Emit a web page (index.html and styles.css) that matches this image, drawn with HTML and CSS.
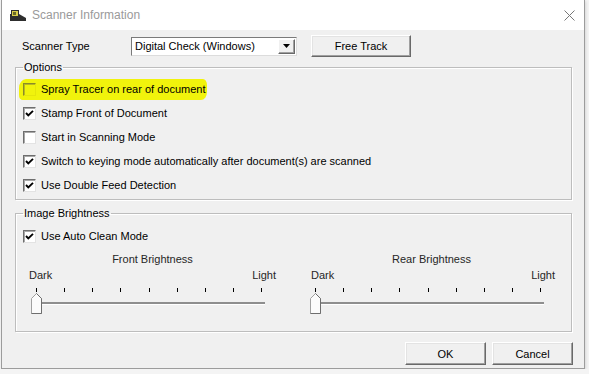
FILE: index.html
```html
<!DOCTYPE html>
<html lang="en">
<head>
  <meta charset="UTF-8">
  <title>Scanner Information</title>
  <link rel="stylesheet" href="styles.css">
</head>
<body>
  <div class="window">
    <div class="titlebar">
      <svg class="app-icon" width="16" height="11" viewBox="0 0 16 11">
        <path d="M0 4h9l7 4v3H0z" fill="#2e2e2e"/>
        <rect x="1.5" y="0.5" width="7" height="6" fill="#d9cf4a" stroke="#2e2e2e"/>
        <rect x="3" y="2" width="3" height="3" fill="#6b6a2a"/>
      </svg>
      <span class="title">Scanner Information</span>
      <svg class="close" width="11" height="11" viewBox="0 0 11 11">
        <path d="M0.5 0.5L10.5 10.5M10.5 0.5L0.5 10.5" stroke="#777" stroke-width="1"/>
      </svg>
    </div>

    <div class="client">
      <div class="type-row">
        <span class="type-label">Scanner Type</span>
        <div class="combo">
          <span class="combo-text">Digital Check (Windows)</span>
          <span class="combo-arrow">
            <svg width="7" height="4" viewBox="0 0 7 4"><path d="M0 0h7L3.5 4z" fill="#000"/></svg>
          </span>
        </div>
        <button class="btn free-track">Free Track</button>
      </div>

      <fieldset class="group options">
        <legend>Options</legend>
        <div class="check-row">
          <label class="check marker"><span class="box"></span>Spray Tracer on rear of document</label>
        </div>
        <div class="check-row">
          <label class="check"><span class="box checked"><svg width="11" height="11" viewBox="0 0 11 11"><path d="M2 5l2.3 2.5L9 2.8" fill="none" stroke="#000" stroke-width="1.9"/></svg></span>Stamp Front of Document</label>
        </div>
        <div class="check-row">
          <label class="check"><span class="box"></span>Start in Scanning Mode</label>
        </div>
        <div class="check-row">
          <label class="check"><span class="box checked"><svg width="11" height="11" viewBox="0 0 11 11"><path d="M2 5l2.3 2.5L9 2.8" fill="none" stroke="#000" stroke-width="1.9"/></svg></span>Switch to keying mode automatically after document(s) are scanned</label>
        </div>
        <div class="check-row">
          <label class="check"><span class="box checked"><svg width="11" height="11" viewBox="0 0 11 11"><path d="M2 5l2.3 2.5L9 2.8" fill="none" stroke="#000" stroke-width="1.9"/></svg></span>Use Double Feed Detection</label>
        </div>
      </fieldset>

      <fieldset class="group brightness">
        <legend>Image Brightness</legend>
        <div class="check-row">
          <label class="check"><span class="box checked"><svg width="11" height="11" viewBox="0 0 11 11"><path d="M2 5l2.3 2.5L9 2.8" fill="none" stroke="#000" stroke-width="1.9"/></svg></span>Use Auto Clean Mode</label>
        </div>
        <div class="sliders">
          <div class="slider">
            <div class="slider-title">Front Brightness</div>
            <div class="slider-ends"><span>Dark</span><span>Light</span></div>
            <div class="scale">
              <div class="ticks"><i></i><i></i><i></i><i></i><i></i><i></i><i></i><i></i><i></i></div>
              <div class="track"></div>
              <svg class="thumb" width="11" height="21" viewBox="0 0 11 21">
                <path d="M0.5 20.5V5.5L5.5 0.5L10.5 5.5V20.5Z" fill="#fbfbfb" stroke="#a0a0a0"/>
                <path d="M5.5 0.5L10.5 5.5V20.5H0.5" fill="none" stroke="#6e6e6e"/>
              </svg>
            </div>
          </div>
          <div class="slider rear">
            <div class="slider-title">Rear Brightness</div>
            <div class="slider-ends"><span>Dark</span><span>Light</span></div>
            <div class="scale">
              <div class="ticks"><i></i><i></i><i></i><i></i><i></i><i></i><i></i><i></i><i></i></div>
              <div class="track"></div>
              <svg class="thumb" width="11" height="21" viewBox="0 0 11 21">
                <path d="M0.5 20.5V5.5L5.5 0.5L10.5 5.5V20.5Z" fill="#fbfbfb" stroke="#a0a0a0"/>
                <path d="M5.5 0.5L10.5 5.5V20.5H0.5" fill="none" stroke="#6e6e6e"/>
              </svg>
            </div>
          </div>
        </div>
      </fieldset>

      <div class="actions">
        <button class="btn dialog-btn">OK</button>
        <button class="btn dialog-btn">Cancel</button>
      </div>
    </div>
  </div>
</body>
</html>
```

FILE: styles.css
```css
* {
  box-sizing: border-box;
}

body {
  margin: 0;
  background: #f4f4f4;
  font-family: "Liberation Sans", Arial, sans-serif;
  font-size: 11px;
  color: #000;
}

.window {
  margin-left: 1px;
  width: 584px;
  height: 369px;
  border: 1px solid #9c9c9c;
  border-top: none;
  background: #f0f0f0;
  display: flex;
  flex-direction: column;
  box-shadow: 1px 1px 3px rgba(0, 0, 0, 0.12);
}

.titlebar {
  flex-shrink: 0;
  height: 30px;
  background: #fff;
  display: flex;
  align-items: center;
  padding-left: 8px;
}

.title {
  margin-left: 6px;
  font-size: 12px;
  color: #9a9a9a;
}

.close {
  margin-left: auto;
  margin-right: 9px;
}

.client {
  flex: 1;
  padding: 5px 12px 0 13px;
}

.type-row {
  display: flex;
  align-items: center;
  height: 22px;
  padding-left: 7px;
}

.type-label {
  width: 109px;
}

.combo {
  width: 166px;
  height: 19px;
  display: flex;
  align-items: center;
  background: #fff;
  border: 1px solid;
  border-color: #7a7a7a #dcdcdc #dcdcdc #7a7a7a;
}

.combo-text {
  flex: 1;
  padding-left: 3px;
}

.combo-arrow {
  width: 17px;
  height: 15px;
  margin-right: 1px;
  display: flex;
  align-items: center;
  justify-content: center;
  background: #f0f0f0;
  border: 1px solid;
  border-color: #fff #696969 #696969 #fff;
  box-shadow: inset -1px -1px 0 #a0a0a0;
}

.btn {
  font-family: inherit;
  font-size: 11px;
  color: #000;
  background: #f0f0f0;
  border: 1px solid;
  border-color: #fff #696969 #696969 #fff;
  box-shadow: inset -1px -1px 0 #a0a0a0, inset 1px 1px 0 #e3e3e3;
  padding: 0;
}

.free-track {
  margin-left: 14px;
  width: 100px;
  height: 22px;
}

.group {
  margin: 0;
  min-width: 0;
  border: 1px solid #bdbdbd;
  box-shadow: inset 1px 1px 0 #fff, 1px 1px 0 #fff;
  padding: 0 7px 2px 7px;
}

.group legend {
  padding: 0 1px;
  margin: 0;
  line-height: 13px;
}

.options {
  margin-top: 4px;
  padding-top: 3px;
}

.check-row {
  display: flex;
  align-items: center;
  height: 24px;
}

.check {
  display: flex;
  align-items: center;
  gap: 5px;
  height: 21px;
}

.box {
  width: 13px;
  height: 13px;
  background: #fff;
  border: 1px solid;
  border-color: #6e6e6e #e3e3e3 #e3e3e3 #6e6e6e;
  box-shadow: inset 1px 1px 0 #a8a8a8;
  display: flex;
}

.marker {
  margin-left: -4px;
  padding: 0 2px 0 4px;
  background: #f1f30c;
  border-radius: 7px 4px 6px 3px / 9px 6px 8px 5px;
}

.marker .box {
  background: transparent;
  border-color: #8a8a2a #e6e60a #e6e60a #8a8a2a;
  box-shadow: inset 1px 1px 0 #b8b820;
}

.brightness {
  margin-top: 7px;
  padding-top: 4px;
  padding-bottom: 17px;
}

.sliders {
  display: flex;
  gap: 32px;
  padding-left: 6px;
  margin-top: 4px;
}

.slider {
  width: 247px;
  color: #262626;
}

.slider-title {
  text-align: center;
  line-height: 14px;
}

.slider-ends {
  display: flex;
  justify-content: space-between;
  line-height: 14px;
  margin-top: 2px;
}

.rear .slider-ends {
  padding-left: 3px;
}

.scale {
  position: relative;
  height: 32px;
  padding-top: 6px;
}

.ticks {
  display: flex;
  justify-content: space-between;
  width: 226px;
  margin-left: 7px;
}

.ticks i {
  width: 1px;
  height: 4px;
  background: #000;
}

.track {
  margin: 10px 0 0 3px;
  width: 233px;
  border-top: 2px solid #8e8e8e;
  border-bottom: 1px solid #fff;
}

.thumb {
  position: absolute;
  left: 2px;
  top: 11px;
}

.actions {
  display: flex;
  justify-content: flex-end;
  gap: 6px;
  margin-top: 10px;
  margin-right: -1px;
}

.dialog-btn {
  width: 81px;
  height: 23px;
}
```
